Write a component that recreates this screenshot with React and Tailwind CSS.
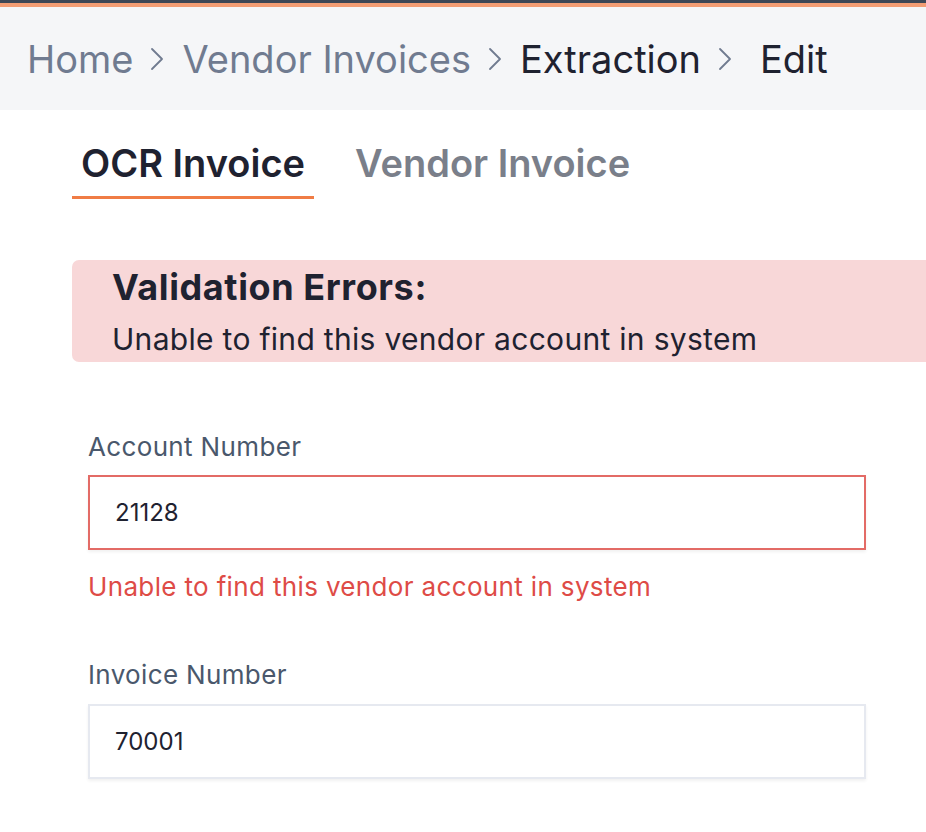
import { ChevronRight } from 'lucide-react';

const crumbs = [
  { label: 'Home', active: false },
  { label: 'Vendor Invoices', active: false },
  { label: 'Extraction', active: true },
  { label: 'Edit', active: true },
];

export default function App() {
  return (
    <div className="min-h-screen w-[926px] bg-white overflow-hidden" style={{ fontFamily: 'Inter, "Noto Sans", sans-serif' }}>
      {/* TOP STRIPES */}
      <div className="h-[3px] bg-[#3d4756]" />
      <div className="h-[4px] bg-[#f39d74]" />

      {/* BREADCRUMB */}
      <nav className="h-[103px] bg-[#f5f6f8] flex items-center pl-[27px]">
        {crumbs.map((c, i) => (
          <div key={c.label} className="flex items-center">
            <span className={`text-[38px] leading-none ${c.active ? 'text-[#1f2230]' : 'text-[#707b90]'}`}>
              {c.label}
            </span>
            {i < crumbs.length - 1 && (
              <ChevronRight
                size={40}
                strokeWidth={1.1}
                className={`ml-[4px] text-[#707b90] ${i === crumbs.length - 2 ? 'mr-[15px]' : 'mr-[5px]'}`}
              />
            )}
          </div>
        ))}
      </nav>

      {/* TABS */}
      <div className="flex items-end gap-[41px] pl-[72px] pt-[34px]">
        <button className="px-[9px] pb-[14px] border-b-[3px] border-[#f07c45] text-[38px] leading-none font-semibold text-[#1f2230]">
          OCR Invoice
        </button>
        <button className="pb-[14px] border-b-[3px] border-transparent text-[38px] leading-none font-semibold text-[#7a7f8a]">
          Vendor Invoice
        </button>
      </div>

      {/* ALERT */}
      <div className="ml-[72px] mt-[61px] -mr-[10px] h-[102px] rounded-[7px] bg-[#f8d7d8] pl-[40px] pt-[7px]">
        <h2 className="text-[36px] leading-[40px] font-bold tracking-[0.6px] text-[#1f2230]">Validation Errors:</h2>
        <p className="mt-[13px] text-[30px] leading-[38px] tracking-[0.3px] text-[#1f2230]">Unable to find this vendor account in system</p>
      </div>

      {/* FORM */}
      <div className="pl-[88px] w-[866px] pt-[70px]">
        <label className="block text-[26px] leading-[30px] tracking-[0.35px] text-[#4a586c]">Account Number</label>
        <input
          readOnly
          value="21128"
          className="mt-[13px] block w-full h-[75px] border-2 border-[#e36b66] px-[25px] text-[24px] text-[#1f2230] outline-none shadow-[0_2px_3px_rgba(0,0,0,0.06)]"
        />
        <p className="mt-[22px] text-[26px] leading-[30px] tracking-[0.35px] text-[#de4b46]">Unable to find this vendor account in system</p>

        <label className="mt-[58px] block text-[26px] leading-[30px] tracking-[0.35px] text-[#4a586c]">Invoice Number</label>
        <input
          readOnly
          value="70001"
          className="mt-[14px] block w-full h-[75px] border-2 border-[#e6e9f0] px-[25px] text-[24px] text-[#1f2230] outline-none shadow-[0_2px_3px_rgba(0,0,0,0.06)]"
        />
      </div>
    </div>
  );
}
